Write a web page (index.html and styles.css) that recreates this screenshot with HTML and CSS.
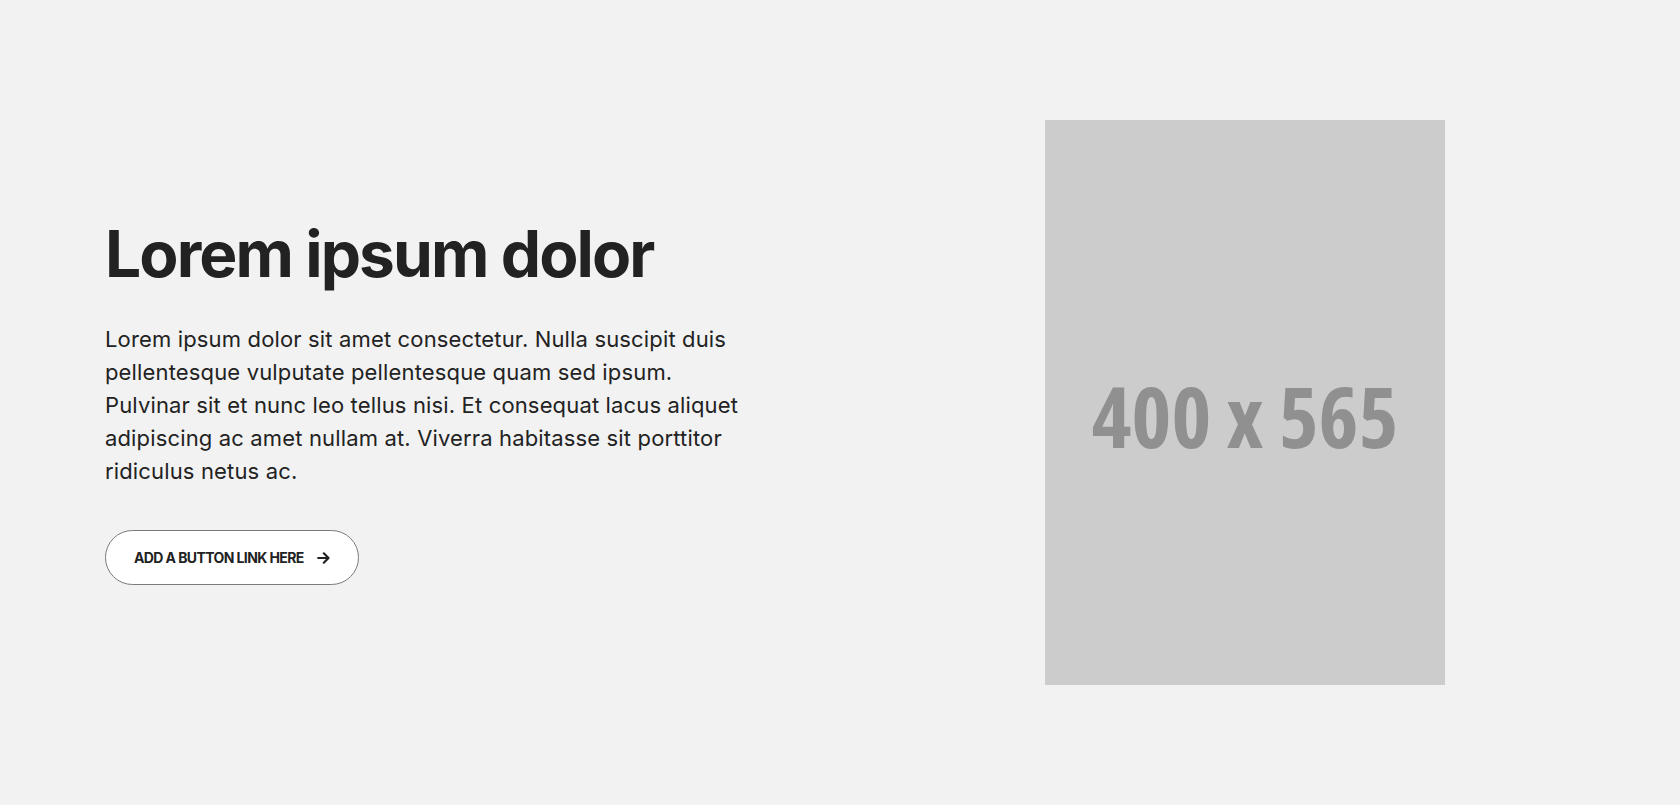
FILE: index.html
```html
<!DOCTYPE html>
<html lang="en">
<head>
<meta charset="utf-8">
<title>Hero</title>
<link rel="stylesheet" href="styles.css">
</head>
<body>
<section class="hero">
  <div class="hero-text">
    <h1 class="hero-title">Lorem ipsum dolor</h1>
    <p class="hero-copy">Lorem ipsum dolor sit amet consectetur. Nulla suscipit duis pellentesque vulputate pellentesque quam sed ipsum. Pulvinar sit et nunc leo tellus nisi. Et consequat lacus aliquet adipiscing ac amet nullam at. Viverra habitasse sit porttitor ridiculus netus ac.</p>
    <a class="hero-button" href="#">
      <span class="hero-button-label">ADD A BUTTON LINK HERE</span>
      <svg class="hero-button-arrow" width="13" height="12" viewBox="0 0 13 12" aria-hidden="true"><path d="M1.2 6h10.2M6.8 1.3L11.5 6 6.8 10.7" fill="none" stroke="#222" stroke-width="2.2" stroke-linecap="round" stroke-linejoin="round"/></svg>
    </a>
  </div>
  <div class="placeholder"><span class="placeholder-label">400 x 565</span></div>
</section>
</body>
</html>
```
FILE: styles.css
```css
* { box-sizing: border-box; }
html, body { margin: 0; padding: 0; }
body {
  background: #f2f2f2;
  color: #222222;
  font-family: Inter, "Liberation Sans", sans-serif;
}
.hero {
  display: flex;
  align-items: center;
  height: 805px;
  padding: 120px 235px 121px 105px;
}
.hero-text {
  width: 660px;
  display: flex;
  flex-direction: column;
  align-items: flex-start;
}
.hero-title {
  margin: 0;
  font-size: 64px;
  line-height: 70px;
  font-weight: 700;
  letter-spacing: -1.9px;
  color: #222222;
}
.hero-copy {
  margin: 34px 0 0;
  max-width: 645px;
  font-size: 22px;
  line-height: 33px;
  font-weight: 400;
  letter-spacing: 0.15px;
  color: #222222;
}
.hero-button {
  margin-top: 42px;
  display: inline-flex;
  align-items: center;
  gap: 13px;
  height: 55px;
  padding: 0 28px;
  border: 1px solid #7a7a7a;
  border-radius: 28px;
  background: #ffffff;
  color: #222222;
  text-decoration: none;
  font-size: 14px;
  font-weight: 700;
  letter-spacing: -0.6px;
}
.hero-button-arrow { display: block; flex: none; }
.placeholder {
  margin-left: auto;
  width: 400px;
  height: 565px;
  flex: none;
  background: #cccccc;
  display: flex;
  align-items: center;
  justify-content: center;
  padding-top: 26px;
  color: #909090;
  font-family: "Open Sans", sans-serif;
  font-stretch: 75%;
  font-weight: 700;
  font-size: 85px;
  white-space: nowrap;
}
```
